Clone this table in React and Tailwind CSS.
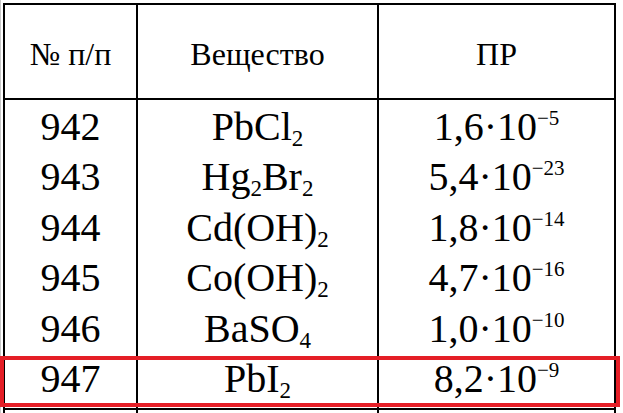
const rows = [
  { n: '942', sub: [['PbCl', '2']], k: '1,6', p: '5' },
  { n: '943', sub: [['Hg', '2'], ['Br', '2']], k: '5,4', p: '23' },
  { n: '944', sub: [['Cd(OH)', '2']], k: '1,8', p: '14' },
  { n: '945', sub: [['Co(OH)', '2']], k: '4,7', p: '16' },
  { n: '946', sub: [['BaSO', '4']], k: '1,0', p: '10' },
  { n: '947', sub: [['PbI', '2']], k: '8,2', p: '9' },
];

function Formula({ parts }) {
  return (
    <span>
      {parts.map(([base, idx], i) => (
        <span key={i}>
          {base}
          <span className="relative top-[6px] text-[23px]">{idx}</span>
        </span>
      ))}
    </span>
  );
}

function Value({ k, p }) {
  return (
    <span>
      {k}·10
      <span className="relative -top-[15px] text-[21px]">−{p}</span>
    </span>
  );
}

export default function App() {
  return (
    <div className="relative w-[623px] h-[413px] overflow-hidden bg-white text-black font-['Liberation_Serif','Times_New_Roman',serif]">
      <div className="h-full border-l border-[#c8c8c8] pl-[2px] pt-[3px]">
        <div className="grid w-[613px] grid-cols-[133px_241px_235px] border-x-2 border-t-2 border-black">
          <div className="flex h-[95px] items-center justify-center border-b-2 border-r-2 border-black pt-1 text-[32px]">
            № п/п
          </div>
          <div className="flex h-[95px] items-center justify-center border-b-2 border-r-2 border-black pt-1 text-[32px]">
            Вещество
          </div>
          <div className="flex h-[95px] items-center justify-center border-b-2 border-black pt-1 text-[32px]">
            ПР
          </div>

          <div className="h-[310px] border-b-2 border-r-2 border-black pt-[1.5px] text-[40px]">
            {rows.map((r) => (
              <div key={r.n} className="h-[50.5px] text-center leading-[50px]">{r.n}</div>
            ))}
          </div>
          <div className="h-[310px] border-b-2 border-r-2 border-black pt-[1.5px] text-[40px]">
            {rows.map((r) => (
              <div key={r.n} className="h-[50.5px] text-center leading-[50px]">
                <Formula parts={r.sub} />
              </div>
            ))}
          </div>
          <div className="h-[310px] border-b-2 border-black pt-[1.5px] text-[40px]">
            {rows.map((r) => (
              <div key={r.n} className="h-[50.5px] text-center leading-[50px]">
                <Value k={r.k} p={r.p} />
              </div>
            ))}
          </div>

          <div className="h-[20px] border-r-2 border-black" />
          <div className="h-[20px] border-r-2 border-black" />
          <div className="h-[20px]" />
        </div>
      </div>

      <div className="absolute left-0 top-[356px] h-[51px] w-[620px] border-4 border-[#e41e26]" />
    </div>
  );
}
